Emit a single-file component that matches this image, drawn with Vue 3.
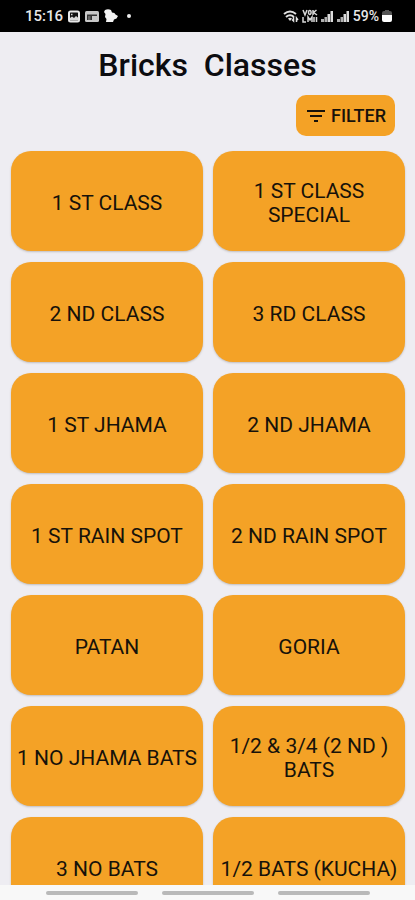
<script setup>
const classes = [
  '1 ST CLASS', '1 ST CLASS SPECIAL',
  '2 ND CLASS', '3 RD CLASS',
  '1 ST JHAMA', '2 ND JHAMA',
  '1 ST RAIN SPOT', '2 ND RAIN SPOT',
  'PATAN', 'GORIA',
  '1 NO JHAMA BATS', '1/2 & 3/4 (2 ND ) BATS',
  '3 NO BATS', '1/2 BATS (KUCHA)',
]
</script>

<template>
  <div class="screen">
    <header class="status">
      <div class="group left">
        <span class="time">15:16</span>
        <svg width="12" height="13" viewBox="0 0 12 13">
          <rect x="1" y="1.500" width="10" height="10" rx="1.500" fill="#111" stroke="#e8e8e8" stroke-width="2" />
          <path d="M2 10.500V8l2-1.500L6 8l2-2 2.500 2v2.500z" fill="#d8d8d8" />
          <path d="M3 4.500h1.500" stroke="#ddd" stroke-width="1.500" />
        </svg>
        <svg width="14" height="13" viewBox="0 0 14 13">
          <rect x="0" y="1" width="14" height="11" rx="1.500" fill="#c8c8c8" />
          <path d="M2 4.500h10V6H7v4H2z" fill="#333" />
          <path d="M3 7h2.500M3 9h2.500" stroke="#999" />
        </svg>
        <svg width="14" height="14" viewBox="0 0 14 14">
          <path d="M1 1q3-1.500 6 0l1 2.500q3 0 3.500 2l2.500 1.500-1.500 2.500-2.500 1-1 2.500H2l.5-3L1 8 1.500 5 0 3z" fill="#f4f4f4" />
        </svg>
        <span class="dot"></span>
      </div>
      <div class="group right">
        <svg width="16" height="14" viewBox="0 0 16 14" fill="none" stroke="#e0e0e0">
          <path d="M1 5q6-5 12 0M3 8q4-3.500 8 0" stroke-width="2" />
          <path d="M5 9.500q2-1.500 4 0l-2 2.500z" fill="#e0e0e0" stroke="none" />
          <path d="M10.500 8v4l-1.500-1.500M13.500 13V9l1.500 2" stroke-width="1.500" />
        </svg>
        <svg width="16" height="14" viewBox="0 0 16 14" fill="none" stroke="#d8d8d8" stroke-width="1.500">
          <path d="M1 1l2 5L5 1M6.500 3.500a1.300 2 0 1 0 2.600 0a1.300 2 0 1 0-2.600 0M11 1v5M14.500 1L11.500 3.500 15 6" />
          <path d="M1 8v5h3M6 13V8l2 3 2-3v5M12 8v5M14.500 8v5" />
        </svg>
        <svg v-for="n in 2" :key="n" width="13" height="14" viewBox="0 0 13 14">
          <path d="M0 10h3v3H0zM3.500 8h2.500v5H3.500z" fill="#b0b0b0" />
          <path d="M6.500 5h2.500v8H6.500zM9.500 2h2.500v11H9.500z" fill="#dcdcdc" />
        </svg>
        <span class="battery-text">59%</span>
        <svg width="10" height="14" viewBox="0 0 10 14">
          <path d="M3 1h4v1h1q2 0 2 2v2H0V4q0-2 2-2h1z" fill="#555" />
          <path d="M0 6h10v5q0 2-2 2H2q-2 0-2-2z" fill="#fff" />
        </svg>
      </div>
    </header>

    <main class="content">
      <h1 class="title">Bricks&nbsp; Classes</h1>
      <div class="toolbar">
        <button class="filter" type="button">
          <svg width="20" height="14" viewBox="0 0 20 14" stroke="#17120a" stroke-width="2">
            <path d="M1 2h18M4 7h12M8 12h4" />
          </svg>
          FILTER
        </button>
      </div>
      <div class="grid">
        <button v-for="name in classes" :key="name" class="card" type="button">{{ name }}</button>
      </div>
    </main>

    <footer class="nav">
      <span v-for="n in 3" :key="n" class="pill"></span>
    </footer>
  </div>
</template>

<style>
body {
  background: #eeedf2;
}
</style>

<style scoped>
.screen {
  display: flex;
  flex-direction: column;
  height: 100vh;
  background: #eeedf2;
  color: #0c0c10;
  font-family: Roboto, "Liberation Sans", sans-serif;
}
.status {
  flex: none;
  display: flex;
  justify-content: space-between;
  align-items: center;
  box-sizing: border-box;
  height: 32px;
  padding: 0 23px 0 25px;
  background: #000;
  color: #e8e8e8;
  font-size: 15px;
  font-weight: 500;
}
.group {
  display: flex;
  align-items: center;
}
.left {
  gap: 5px;
}
.right {
  gap: 3px;
}
.dot {
  width: 4px;
  height: 4px;
  margin-left: 4px;
  border-radius: 50%;
  background: #eee;
}
.battery-text {
  font-size: 14px;
}
.content {
  flex: 1;
  min-height: 0;
  overflow: hidden;
}
.title {
  margin: 0;
  padding: 15px 0 12px;
  font-size: 32px;
  line-height: 36px;
  font-weight: 500;
  text-align: center;
}
.toolbar {
  display: flex;
  justify-content: flex-end;
  padding: 0 20px 15px;
}
.filter {
  display: flex;
  align-items: center;
  justify-content: center;
  gap: 5px;
  height: 41px;
  padding: 0 9px 0 10px;
  border: 0;
  border-radius: 10px;
  background: #f4a226;
  color: #17120a;
  font: 500 18px Roboto, "Liberation Sans", sans-serif;
}
.grid {
  display: grid;
  grid-template-columns: 1fr 1fr;
  gap: 11px 10px;
  padding: 0 10px 11px 11px;
}
.card {
  min-height: 100px;
  padding: 3px 6px 0;
  border: 0;
  border-radius: 20px;
  background: #f4a226;
  box-shadow: 0 1px 2px rgba(60, 50, 40, 0.25);
  color: #17120a;
  font: 400 21px/24px Roboto, "Liberation Sans", sans-serif;
}
.nav {
  flex: none;
  display: flex;
  justify-content: center;
  gap: 24px;
  height: 9px;
  padding-top: 6px;
  background: #f8f8f8;
}
.pill {
  width: 92px;
  height: 4px;
  border-radius: 2px;
  background: #b9b9b9;
}
</style>
